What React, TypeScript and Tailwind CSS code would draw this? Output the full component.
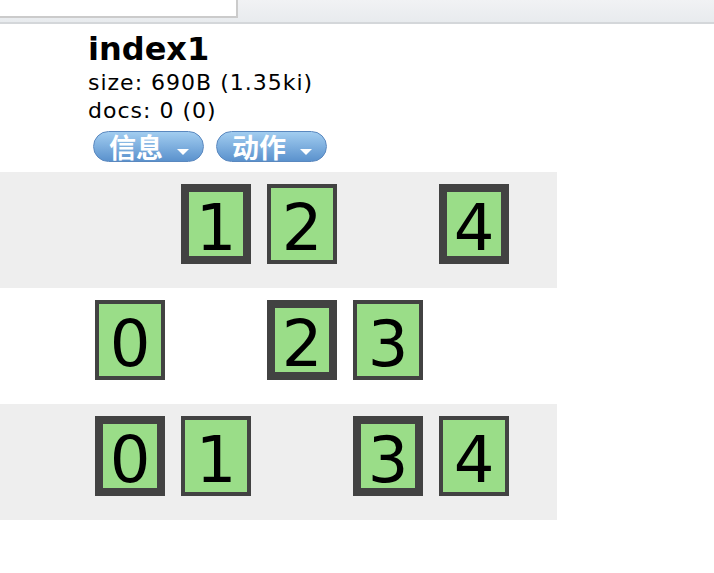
import React from "react";

type Cell = null | { n: number; thick: boolean };

const rows: { bg: string; cells: Cell[] }[] = [
  {
    bg: "bg-[#eeeeee]",
    cells: [null, { n: 1, thick: true }, { n: 2, thick: false }, null, { n: 4, thick: true }],
  },
  {
    bg: "bg-white",
    cells: [{ n: 0, thick: false }, null, { n: 2, thick: true }, { n: 3, thick: false }, null],
  },
  {
    bg: "bg-[#eeeeee]",
    cells: [{ n: 0, thick: true }, { n: 1, thick: false }, null, { n: 3, thick: true }, { n: 4, thick: false }],
  },
];

function Btn({ label }: { label: string }) {
  return (
    <div className="w-[111px] h-[31px] rounded-full border border-[#5a88bf] bg-gradient-to-b from-[#a2cdf0] to-[#5b92cd] flex items-start pl-[15px] pt-[1px] text-white font-bold text-[27px] leading-none">
      <span style={{ fontFamily: '"Noto Sans CJK SC", sans-serif' }} className="leading-[27px]">{label}</span>
      <span className="ml-[14px] mt-[16px] w-0 h-0 border-l-[6px] border-r-[6px] border-t-[6px] border-l-transparent border-r-transparent border-t-white" />
    </div>
  );
}

export default function App() {
  return (
    <div
      className="w-[714px] h-[573px] bg-white overflow-hidden text-black"
      style={{ fontFamily: '"DejaVu Sans", Verdana, sans-serif' }}
    >
      <div className="h-[24px] border-b-2 border-[#d4d7da] bg-gradient-to-b from-[#f1f2f4] to-[#e8ebee]">
        <div className="w-[238px] h-[18px] bg-white border-r-2 border-b-2 border-[#cbcbcb]" />
      </div>
      <div className="pl-[88px] pt-[6px]">
        <div className="text-[32px] font-bold leading-[38px]">index1</div>
        <div className="mt-[1px] text-[22px] leading-[28px] tracking-[1px]">size: 690B (1.35ki)</div>
        <div className="text-[22px] leading-[28px] tracking-[1px]">docs: 0 (0)</div>
        <div className="mt-[6px] ml-[5px] flex gap-[12px]">
          <Btn label="信息" />
          <Btn label="动作" />
        </div>
      </div>
      <div className="mt-[10px] w-[557px]">
        {rows.map((r, i) => (
          <div key={i} className={`h-[116px] pt-[12px] pl-[95px] flex gap-[16px] ${r.bg}`}>
            {r.cells.map((c, j) =>
              c ? (
                <div
                  key={j}
                  className={`w-[70px] h-[80px] border-4 border-[#424242] bg-[#9add88] text-center text-[64px] leading-[80px] ${
                    c.thick ? "shadow-[inset_0_0_0_4px_#424242]" : ""
                  }`}
                >
                  {c.n}
                </div>
              ) : (
                <div key={j} className="w-[70px] h-[80px]" />
              )
            )}
          </div>
        ))}
      </div>
    </div>
  );
}
